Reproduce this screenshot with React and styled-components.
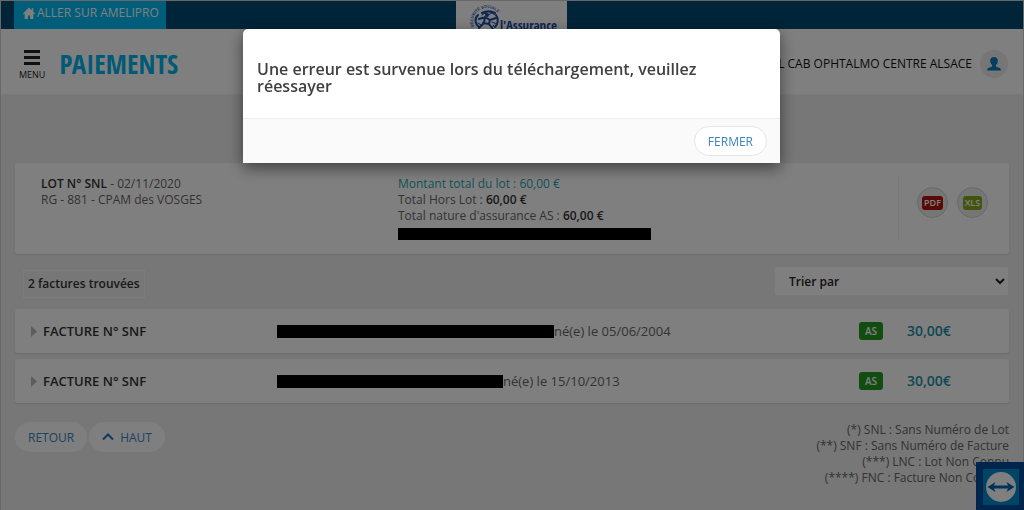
import React from 'react';
import styled, { createGlobalStyle } from 'styled-components';

const GlobalStyle = createGlobalStyle`
  *, *::before, *::after { box-sizing: border-box; }
  body {
    margin: 0;
    background: #eeeeee;
    color: #666666;
    font: 400 12px/16px 'Open Sans', sans-serif;
  }
  p, h1, h2, ul { margin: 0; padding: 0; }
  button, select { font-family: inherit; }
  a { text-decoration: none; }
`;

const Page = styled.div`
  min-height: 100vh;
  border: 1px solid #d0d0d0;
  border-bottom: 0;
  overflow: hidden;
`;

const TopBar = styled.nav`
  display: grid;
  grid-template-columns: 1fr 111px 1fr;
  height: 28px;
  padding: 0 14px 0 13px;
  background: #004870;
`;

const HomeLink = styled.a`
  display: flex;
  justify-self: start;
  gap: 2px;
  padding: 4px 7px 8px 9px;
  background: #00bcf6;
  color: #ffffff;
  font-size: 12px;
  line-height: 16px;
`;

const LogoPlate = styled.div`
  height: 28px;
  background: #ffffff;
  svg { display: block; }
`;

const Header = styled.header`
  display: flex;
  align-items: center;
  height: 66px;
  padding: 4px 15px 0 18px;
  background: #ffffff;
  border-bottom: 1px solid #f4f4f4;
`;

const MenuButton = styled.button`
  display: flex;
  flex-direction: column;
  align-items: center;
  gap: 2px;
  margin-right: 14px;
  padding: 4px 0 0;
  border: 0;
  background: none;
  color: #222222;
  font-size: 9px;
  font-weight: 500;
  line-height: 14px;
`;

const PageTitle = styled.h1`
  color: #00b4ee;
  font: 700 27px/32px 'Open Sans Condensed', 'Roboto Condensed', 'Liberation Sans Narrow', sans-serif;
`;

const Account = styled.div`
  display: flex;
  align-items: center;
  gap: 8px;
  margin-left: auto;
  color: #111111;
  font-size: 12px;
  font-weight: 500;
`;

const RoundButton = styled.button`
  display: grid;
  place-items: center;
  width: ${(p) => p.$size}px;
  height: ${(p) => p.$size}px;
  padding: 0;
  border: ${(p) => (p.$outlined ? '1px solid #d2d2d2' : '0')};
  border-radius: 50%;
  background: #ececec;
`;

const Main = styled.main`
  padding: 68px 14px 0 14px;
`;

const Panel = styled.section`
  border-radius: 3px;
  background: #ffffff;
  box-shadow: 0 1px 2px rgba(0, 0, 0, 0.1);
`;

const LotPanel = styled(Panel)`
  display: grid;
  grid-template-columns: 357px 1fr 111px;
  padding: 13px 0 14px 26px;
`;

const LotText = styled.div`
  line-height: 16px;
  strong { color: #333333; font-weight: 600; }
`;

const LotTotal = styled.p`
  color: #26a4b0;
`;

const Redacted = styled.span`
  display: ${(p) => (p.$block ? 'block' : 'inline-block')};
  width: ${(p) => p.$width}px;
  max-width: 100%;
  height: ${(p) => (p.$block ? 12 : 13)}px;
  margin-top: ${(p) => (p.$block ? 4 : 0)}px;
  background: #000000;
`;

const Exports = styled.div`
  display: flex;
  gap: 9px;
  padding: 11px 0 0 18px;
  border-left: 1px solid #eeeeee;
`;

const FileTag = styled.span`
  padding: 0 2px;
  border-radius: 3px;
  background: ${(p) => p.$color};
  color: #ffffff;
  font-size: 9px;
  font-weight: 600;
  line-height: 14px;
`;

const Tools = styled.div`
  display: flex;
  align-items: flex-start;
  justify-content: space-between;
  padding: 12px 0 11px 8px;
`;

const Count = styled.p`
  margin-top: 4px;
  padding: 5px 4px;
  border: 1px solid #f8f8f8;
  color: #333333;
  font-weight: 600;
`;

const Sort = styled.select`
  width: 235px;
  height: 30px;
  padding: 0 0 0 10px;
  border: 1px solid #f0f0f0;
  border-radius: 3px;
  background-color: #ffffff;
  color: #222222;
  font-size: 12px;
  font-weight: 600;
`;

const Invoice = styled(Panel)`
  display: grid;
  grid-template-columns: 246px 1fr 48px 102px;
  align-items: center;
  height: 44px;
  margin-bottom: 6px;
  padding-left: 16px;
`;

const InvoiceToggle = styled.button`
  display: flex;
  align-items: center;
  gap: 6px;
  padding: 0;
  border: 0;
  background: none;
  color: #333333;
  font-size: 13px;
  font-weight: 600;
  line-height: 18px;
`;

const Patient = styled.p`
  display: flex;
  align-items: center;
  font-size: 13px;
  line-height: 18px;
`;

const Regime = styled.span`
  justify-self: start;
  padding: 0 6px;
  border-radius: 3px;
  background: #229a22;
  color: #ffffff;
  font-size: 10px;
  font-weight: 600;
  line-height: 18px;
`;

const Amount = styled.span`
  color: #1c91a8;
  font-size: 14px;
  font-weight: 600;
`;

const Bottom = styled.footer`
  display: flex;
  justify-content: space-between;
  padding-top: 13px;
`;

const Actions = styled.div`
  display: flex;
  align-items: flex-start;
  gap: 2px;
`;

const Pill = styled.button`
  display: flex;
  align-items: center;
  gap: 6px;
  height: 30px;
  padding: 0 13px;
  border: ${(p) => (p.$flat ? '0' : '1px solid #e6e6e6')};
  border-radius: 15px;
  background: #ffffff;
  color: #3a84c0;
  font-size: 12px;
`;

const Notes = styled.ul`
  list-style: none;
  text-align: right;
  line-height: 16px;
`;

const RemoteBadge = styled.div`
  position: fixed;
  right: 0;
  bottom: 0;
  width: 48px;
  height: 48px;
`;

const Backdrop = styled.div`
  position: fixed;
  inset: 0;
  display: flex;
  justify-content: center;
  align-items: flex-start;
  padding: 29px 1px 0 0;
  background: rgba(0, 0, 0, 0.5);
`;

const Modal = styled.section`
  width: 537px;
  max-width: 90%;
  border-radius: 5px 5px 0 0;
  background: #ffffff;
  box-shadow: 0 5px 15px rgba(0, 0, 0, 0.5);
`;

const ModalTitle = styled.h2`
  padding: 32px 14px 23px;
  color: #404040;
  font-size: 16px;
  font-weight: 600;
  line-height: 17px;
`;

const ModalFooter = styled.div`
  display: flex;
  justify-content: flex-end;
  padding: 7px 13px;
  border-top: 1px solid #eeeeee;
  background: #fafafa;
`;

const HomeIcon = () => (
  <svg width="12" height="16" viewBox="0 0 12 16" fill="#fff" aria-hidden="true">
    <path d="M6 2.500 0 8.500l.8.900.9-.8V14h3.200v-3.600h2.200V14h3.200V8.600l.9.800.8-.9-1.700-1.700V3.200H8.700v2Z" />
  </svg>
);

const Logo = () => (
  <svg width="111" height="46" viewBox="0 0 111 46" role="img" aria-label="l'Assurance Maladie">
    <defs>
      <path id="arc" d="M18 26A14 14 0 1 1 45 20" />
    </defs>
    <text fill="#2458a8" fontFamily="Liberation Sans" fontSize="4" fontWeight="700">
      <textPath href="#arc">SÉCURITÉ SOCIALE</textPath>
    </text>
    <g fill="none" stroke="#1c4ca6" strokeLinecap="round">
      <path strokeWidth="2" d="M22 14c-4 4-3 9 1 12M26 12c4-2 9-2 13 0M40 14c3 4 2 9-1 12" />
      <path strokeWidth="2" d="m23 18 6-2 5 3 6-2M29 16l-1 6-5 5M34 19l-1 4 4 5M27 22l6 1" />
      <path strokeWidth="1" d="m26 14 3-2 3 2 4-2 3 2M22 22l3 2M36 21l5 2M38 24l-2 3" />
    </g>
    <circle cx="31" cy="14" r="2" fill="#1c4ca6" />
    <text x="44" y="29" fill="#1c4ca6" fontFamily="Open Sans Condensed, Liberation Sans Narrow, sans-serif" fontSize="13" fontWeight="700">
      l'Assurance
    </text>
  </svg>
);

const Burger = () => (
  <svg width="16" height="16" viewBox="0 0 16 16" fill="#222" aria-hidden="true">
    <path d="M0 0h16v3H0zM0 6h16v3H0zM0 12h16v3H0z" />
  </svg>
);

const UserIcon = () => (
  <svg width="14" height="14" viewBox="0 0 14 14" fill="#007fc0" aria-hidden="true">
    <path d="M7 0c2.400 0 3.800 1.500 3.800 3.800 0 1.800-.8 3.400-1.900 4.300v1.300c1.200.7 3.400 1 4.300 2 .5.5.8 1.300.8 2.100H0c0-.8.3-1.600.8-2.100.9-1 3.100-1.300 4.300-2V8.100C4 7.200 3.200 5.600 3.200 3.800 3.200 1.500 4.600 0 7 0Z" />
  </svg>
);

const Caret = () => (
  <svg width="6" height="11" viewBox="0 0 6 11" fill="#bbb" aria-hidden="true">
    <path d="M0 0l6 5.500L0 11z" />
  </svg>
);

const ChevronUp = () => (
  <svg width="12" height="8" viewBox="0 0 12 8" fill="none" stroke="#2470b4" strokeWidth="2" aria-hidden="true">
    <path d="m1 6.500 5-5 5 5" />
  </svg>
);

const RemoteIcon = () => (
  <svg width="48" height="48" viewBox="0 0 48 48" role="img" aria-label="TeamViewer">
    <path fill="#004c9c" d="M0 0h48v48H0z" />
    <path fill="#0089cc" d="M7 7h36v36H7z" />
    <circle cx="25" cy="25" r="15" fill="#fff" />
    <path fill="#0064b8" d="m11.500 25 8-5-1.500 3.600h14L30.500 20l8 5-8 5 1.500-3.600H18l1.500 3.600z" />
  </svg>
);

const invoices = [
  { id: 1, hidden: 277, born: '05/06/2004', amount: '30,00€' },
  { id: 2, hidden: 226, born: '15/10/2013', amount: '30,00€' },
];

export default function App() {
  return (
    <>
      <GlobalStyle />
      <Page>
        <TopBar>
          <HomeLink href="#amelipro">
            <HomeIcon />
            ALLER SUR AMELIPRO
          </HomeLink>
          <LogoPlate>
            <Logo />
          </LogoPlate>
        </TopBar>
        <Header>
          <MenuButton type="button">
            <Burger />
            MENU
          </MenuButton>
          <PageTitle>PAIEMENTS</PageTitle>
          <Account>
            SELARL CAB OPHTALMO CENTRE ALSACE
            <RoundButton type="button" $size={28} aria-label="Mon compte">
              <UserIcon />
            </RoundButton>
          </Account>
        </Header>
        <Main>
          <LotPanel>
            <LotText>
              <p><strong>LOT N° SNL</strong> - 02/11/2020</p>
              <p>RG - 881 - CPAM des VOSGES</p>
            </LotText>
            <LotText>
              <LotTotal>Montant total du lot : 60,00 €</LotTotal>
              <p>Total Hors Lot : <strong>60,00 €</strong></p>
              <p>Total nature d'assurance AS : <strong>60,00 €</strong></p>
              <Redacted $block $width={253} />
            </LotText>
            <Exports>
              <RoundButton type="button" $size={31} $outlined>
                <FileTag $color="#b4140c">PDF</FileTag>
              </RoundButton>
              <RoundButton type="button" $size={31} $outlined>
                <FileTag $color="#86a81c">XLS</FileTag>
              </RoundButton>
            </Exports>
          </LotPanel>
          <Tools>
            <Count>2 factures trouvées</Count>
            <Sort aria-label="Trier par" defaultValue="">
              <option value="">Trier par</option>
            </Sort>
          </Tools>
          {invoices.map((invoice) => (
            <Invoice key={invoice.id}>
              <InvoiceToggle type="button">
                <Caret />
                FACTURE N° SNF
              </InvoiceToggle>
              <Patient>
                <Redacted $width={invoice.hidden} />
                né(e) le {invoice.born}
              </Patient>
              <Regime>AS</Regime>
              <Amount>{invoice.amount}</Amount>
            </Invoice>
          ))}
          <Bottom>
            <Actions>
              <Pill type="button" $flat>RETOUR</Pill>
              <Pill type="button" $flat>
                <ChevronUp />
                HAUT
              </Pill>
            </Actions>
            <Notes>
              <li>(*) SNL : Sans Numéro de Lot</li>
              <li>(**) SNF : Sans Numéro de Facture</li>
              <li>(***) LNC : Lot Non Connu</li>
              <li>(****) FNC : Facture Non Connue</li>
            </Notes>
          </Bottom>
        </Main>
      </Page>
      <RemoteBadge>
        <RemoteIcon />
      </RemoteBadge>
      <Backdrop>
        <Modal role="dialog" aria-modal="true" aria-labelledby="error-title">
          <ModalTitle id="error-title">
            Une erreur est survenue lors du téléchargement, veuillez réessayer
          </ModalTitle>
          <ModalFooter>
            <Pill type="button">FERMER</Pill>
          </ModalFooter>
        </Modal>
      </Backdrop>
    </>
  );
}
